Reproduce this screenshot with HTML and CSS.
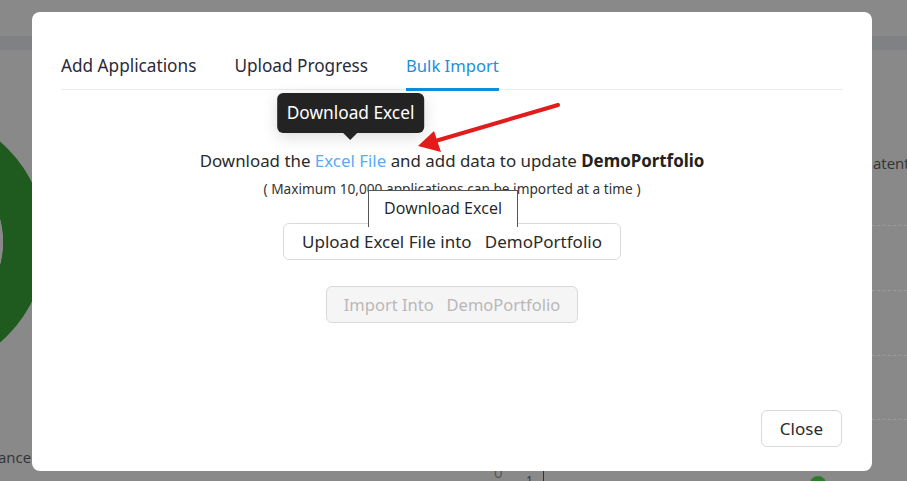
FILE: index.html
```html
<!DOCTYPE html>
<html lang="en">
<head>
<meta charset="utf-8">
<title>Bulk Import</title>
<link rel="stylesheet" href="styles.css">
</head>
<body>
<div class="backdrop">
  <div class="topband"></div>
  <div class="donut"></div>
  <span class="bg-text bg-ance">ance</span>
  <span class="bg-text bg-atente">atente</span>
  <div class="dash d1"></div>
  <div class="dash d2"></div>
  <div class="dash d3"></div>
  <div class="dash d4"></div>
  <span class="bg-text bg-zero">0</span>
  <span class="bg-text bg-one">1</span>
  <div class="bg-axis"></div>
  <div class="bg-dot"></div>
</div>

<div class="modal">
  <div class="tabs">
    <div class="tab">Add Applications</div>
    <div class="tab">Upload Progress</div>
    <div class="tab active">Bulk Import</div>
  </div>

  <div class="content">
    <p class="lead">Download the <span class="link-wrap"><a class="link">Excel File</a><span class="tip">Download Excel</span></span> and add data to update <b>DemoPortfolio</b></p>
    <p class="note">( Maximum 10,000 applications can be imported at a time )</p>
    <div class="upload-wrap">
      <button class="btn">Upload Excel File into&nbsp;&nbsp; DemoPortfolio</button>
      <span class="native-tip">Download Excel</span>
    </div>
    <button class="btn btn-disabled">Import Into&nbsp;&nbsp; DemoPortfolio</button>
  </div>

  <div class="footer">
    <button class="btn">Close</button>
  </div>

  <svg class="arrow" viewBox="32 12 840 459" width="840" height="459">
    <line x1="558" y1="105" x2="432" y2="142" stroke="#e21b1b" stroke-width="4" stroke-linecap="round"/>
    <polygon points="418,146 434,131 441,152" fill="#e21b1b"/>
  </svg>
</div>
</body>
</html>
```

FILE: styles.css
```css
* { box-sizing: border-box; }
html, body { margin: 0; padding: 0; }
body {
  width: 907px;
  height: 481px;
  overflow: hidden;
  background: #898989;
  font-family: "Noto Sans", "Inter", sans-serif;
  color: #2a2a2a;
  position: relative;
}

/* backdrop page, dimmed */
.backdrop { position: absolute; inset: 0; }
.topband { position: absolute; left: 0; right: 0; top: 36px; height: 14px; background: #7f8184; }
.donut {
  position: absolute;
  left: -220px; top: 109px;
  width: 266px; height: 266px;
  border-radius: 50%;
  background: radial-gradient(circle closest-side, #898989 0 67.5%, #1f5a1f 68% 100%);
}
.bg-text { position: absolute; font-family: "Open Sans", sans-serif; font-size: 15px; color: #333; }
.bg-ance { left: -2px; top: 447px; }
.bg-atente { left: 873px; top: 153px; }
.bg-zero { left: 494px; top: 462px; color: #555; }
.bg-one { left: 526px; top: 472px; font-size: 12px; color: #333; }
.bg-axis { position: absolute; left: 543px; top: 471px; width: 1px; height: 10px; background: #333; }
.bg-dot { position: absolute; left: 810px; top: 476px; width: 16px; height: 16px; border-radius: 50%; background: #2e7a2e; }
.dash { position: absolute; left: 872px; right: 0; height: 0; border-top: 1px dashed #9a9a9a; }
.d1 { top: 225px; } .d2 { top: 290px; } .d3 { top: 355px; } .d4 { top: 419px; }

/* modal */
.modal {
  position: absolute;
  left: 32px; top: 12px;
  width: 840px; height: 459px;
  background: #fff;
  border-radius: 8px;
  padding: 0 29px 24px;
  display: flex;
  flex-direction: column;
}
.tabs {
  display: flex;
  gap: 38px;
  padding-top: 42px;
  border-bottom: 1px solid #ececec;
}
.tab {
  font-size: 17.2px;
  line-height: 24px;
  padding-bottom: 10px;
  border-bottom: 3px solid transparent;
  margin-bottom: -2px;
  color: #2a2a3a;
}
.tab.active { color: #1a8fdc; border-bottom-color: #0b8fe0; font-size: 16.6px; }

.content {
  display: flex;
  flex-direction: column;
  align-items: center;
}
.lead {
  margin: 59px 0 0;
  font-size: 16.9px;
  line-height: 24px;
  color: #2a2a2a;
}
.lead b { font-weight: 700; color: #222; }
.link-wrap { position: relative; }
.link { color: #5aaaf5; }
.tip {
  position: absolute;
  left: 50%;
  bottom: calc(100% + 16px);
  transform: translateX(-50%);
  white-space: nowrap;
  background: #232323;
  color: #fff;
  font-size: 17.3px;
  line-height: 40px;
  padding: 0 10px;
  border-radius: 6px;
  box-shadow: 0 4px 16px rgba(0,0,0,0.14);
}
.tip::after {
  content: "";
  position: absolute;
  left: 50%;
  top: 100%;
  transform: translateX(-50%);
  border: 7px solid transparent;
  border-top-color: #232323;
  border-bottom: 0;
}
.note {
  margin: 7px 0 0;
  font-size: 13.7px;
  line-height: 18px;
  color: #333;
}
.upload-wrap { position: relative; margin-top: 25px; }
.btn {
  font-family: inherit;
  font-size: 17px;
  line-height: 35px;
  padding: 0 18px;
  background: #fff;
  color: #2a2a2a;
  border: 1px solid #d9d9d9;
  border-radius: 6px;
}
.btn-disabled {
  margin-top: 26px;
  padding: 0 17px;
  font-size: 16.5px;
  background: #f5f5f5;
  color: #b8b8b8;
}
.native-tip {
  position: absolute;
  left: 85px;
  top: -33px;
  width: 150px;
  height: 37px;
  background: #fff;
  border: 1px solid #555;
  border-bottom: 0;
  font-family: "Open Sans", sans-serif;
  font-size: 16px;
  line-height: 34px;
  text-align: center;
  color: #222;
}
.footer {
  margin-top: auto;
  display: flex;
  justify-content: flex-end;
  padding-right: 1px;
}
.arrow { position: absolute; left: 0; top: 0; pointer-events: none; }
```
